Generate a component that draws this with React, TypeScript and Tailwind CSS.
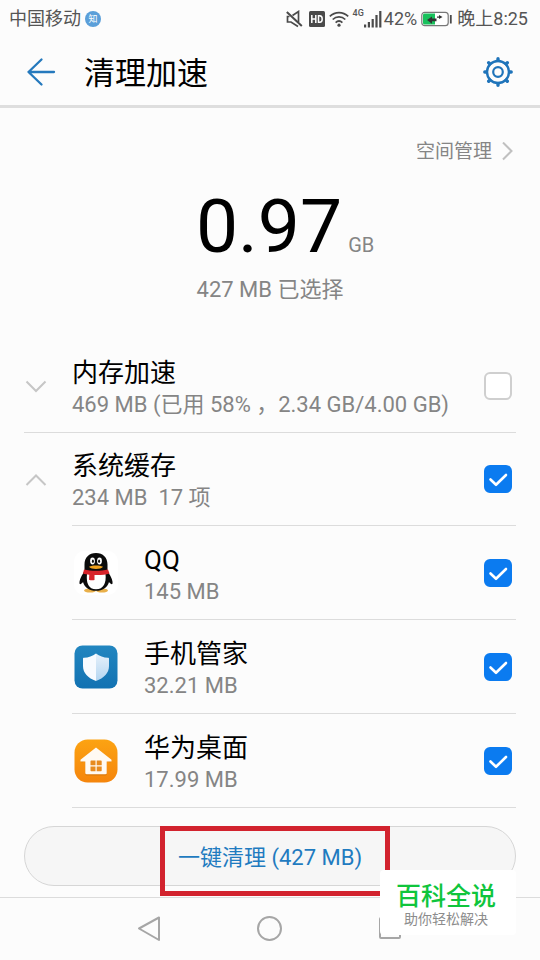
import { useState } from 'react';
import type { ReactNode } from 'react';

type CacheApp = {
  id: string;
  name: string;
  size: string;
  icon: ReactNode;
};

function StatusBar() {
  return (
    <div className="flex h-[38px] items-center justify-between pl-[9px] pr-3 text-lg leading-6 text-[#555]">
      <div className="flex items-center gap-1">
        <span>中国移动</span>
        <span className="flex size-4 items-center justify-center rounded-full bg-[#5b9fd9] text-[9px] leading-4 text-white">
          知
        </span>
      </div>
      <div className="flex items-center">
        {/* muted speaker */}
        <svg width="17" height="18" viewBox="0 0 17 18" fill="none" stroke="#4a4a4a" strokeWidth="1.700" aria-hidden="true">
          <path d="M3.500 6.500H1.500v5.500H5l7 4.500M6.500 5.500l6-4V12" />
          <path d="M.8 2l15 14" strokeWidth="2" />
        </svg>
        <svg className="ml-1.5" width="16" height="16" viewBox="0 0 16 16" aria-hidden="true">
          <rect width="16" height="16" rx="1.500" fill="#4a4a4a" />
          <path d="M2.800 4v8M6.800 4v8M2.800 8h4M9.500 4.700v6.600h1.300c1.600 0 2.400-1 2.400-3.300s-.8-3.300-2.400-3.300z" fill="none" stroke="#fff" strokeWidth="1.500" />
        </svg>
        <svg className="ml-1" width="20" height="16" viewBox="0 0 20 16" fill="none" stroke="#4a4a4a" strokeWidth="1.700" aria-hidden="true">
          <path d="M.8 5.300c5.200-5 13.200-5 18.400 0M3.700 8.500c3.600-3.500 9-3.500 12.600 0M6.600 11.600c2-1.900 4.800-1.900 6.800 0" />
          <circle cx="10" cy="14.200" r="1.600" fill="#4a4a4a" stroke="none" />
        </svg>
        <span className="ml-1 self-start text-[9px] font-medium leading-3">4G</span>
        <svg width="18" height="17" viewBox="0 0 18 17" fill="#4a4a4a" aria-hidden="true">
          <rect x="0" y="13.500" width="2.200" height="3" />
          <rect x="3.800" y="11" width="2.200" height="5.500" />
          <rect x="7.600" y="8" width="2.200" height="8.500" />
          <rect x="11.400" y="4" width="2.200" height="12.500" />
          <rect x="15.200" y="0" width="2.200" height="16.500" />
        </svg>
        <span className="ml-0.5">42%</span>
        <svg className="ml-1" width="32" height="16" viewBox="0 0 32 16" aria-hidden="true">
          <rect x=".8" y="1.300" width="26.400" height="13.400" rx="3" fill="#fff" stroke="#777" strokeWidth="1.200" />
          <path d="M3.500 2.500H14v11H3.500a1.500 1.500 0 0 1-1.500-1.500V4a1.500 1.500 0 0 1 1.500-1.500z" fill="#18c15c" />
          <path d="M6 9l5-3.500V7.500h4.500v2.800H11v2.500zM16 5.500h2V4l3.500 2-3.500 2V6.800h-2z" fill="#333" />
          <path d="M29.800 4v8.500" stroke="#4a4a4a" strokeWidth="1.800" />
        </svg>
        <span className="ml-1">晚上8:25</span>
      </div>
    </div>
  );
}

function Header() {
  return (
    <header className="flex h-[70px] items-center border-b-3 border-[#dedede] pl-[26px] pr-[27px]">
      <button type="button" aria-label="返回">
        <svg width="30" height="30" viewBox="0 0 30 30" fill="none" stroke="#2579bd" strokeWidth="2.300" strokeLinecap="round" strokeLinejoin="round">
          <path d="M28 15H2.500M15.500 2.500L2.500 15l13 12.500" />
        </svg>
      </button>
      <h1 className="ml-7 flex-1 pt-1 text-[31px] leading-10 text-black">清理加速</h1>
      <button type="button" aria-label="设置">
        <svg width="30" height="30" viewBox="0 0 30 30" fill="none" stroke="#1f74ba">
          <circle cx="15" cy="15" r="11" strokeWidth="2.400" />
          <circle cx="15" cy="15" r="4.800" strokeWidth="2.200" />
          <path
            d="M15 3.500V1.800M15 26.500v1.700M3.500 15H1.800M26.500 15h1.700M6.900 6.900L5.700 5.700M23.100 23.100l1.200 1.200M6.900 23.100l-1.200 1.200M23.100 6.900l1.200-1.200"
            strokeWidth="3.400"
            strokeLinecap="round"
          />
        </svg>
      </button>
    </header>
  );
}

function CheckBox({ id, label, checked, onChange }: { id: string; label: string; checked: boolean; onChange: () => void }) {
  return (
    <span className="relative mr-1 size-7 shrink-0">
      <input
        id={id}
        type="checkbox"
        aria-label={label}
        checked={checked}
        onChange={onChange}
        className="block size-7 appearance-none rounded-md border-2 border-[#cfcfcf] bg-white checked:border-[#0b7bf0] checked:bg-[#0b7bf0]"
      />
      {checked && (
        <svg className="pointer-events-none absolute inset-0" width="28" height="28" viewBox="0 0 28 28" fill="none" stroke="#fff" strokeWidth="2.600" strokeLinecap="round" strokeLinejoin="round" aria-hidden="true">
          <path d="M6.500 14.500l5.500 5.300L22 10" />
        </svg>
      )}
    </span>
  );
}

function RowText({ htmlFor, title, detail }: { htmlFor: string; title: string; detail: string }) {
  return (
    <label htmlFor={htmlFor} className="min-w-0 flex-1 pt-1.5">
      <span className="block text-[26px] leading-8 text-black">{title}</span>
      <span className="block whitespace-pre text-[22px] leading-8 text-[#858585]">{detail}</span>
    </label>
  );
}

function Chevron({ open, label, onClick }: { open: boolean; label: string; onClick?: () => void }) {
  return (
    <button type="button" aria-label={label} aria-expanded={open} onClick={onClick} className="w-12 shrink-0">
      <svg width="24" height="24" viewBox="0 0 24 24" fill="none" stroke="#c6c6c6" strokeWidth="2">
        <path d={open ? 'M2.500 17L12 7.500 21.500 17' : 'M2.500 7.500L12 17l9.500-9.500'} />
      </svg>
    </button>
  );
}

const QQIcon = (
  <svg width="44" height="44" viewBox="0 0 44 44" aria-hidden="true">
    <rect width="44" height="44" rx="10" fill="#fff" />
    <ellipse cx="16" cy="39.500" rx="6" ry="2" fill="#e9b04a" />
    <ellipse cx="28" cy="39.500" rx="6" ry="2" fill="#e9b04a" />
    <path d="M22 2c-7 0-11.500 4.500-11.500 11.500V20c-2.500 4-5.500 9-5 12.500.3 1.500 2 .5 3.500-1.500C10.500 36.500 15.500 39.800 22 39.800S33.500 36.500 35 31c1.500 2 3.200 3 3.500 1.500.5-3.500-2.500-8.500-5-12.500v-6.500C33.500 6.500 29 2 22 2z" fill="#0b0b0b" />
    <path d="M13 23c-1 9 1.500 15.300 9 15.300S32.500 32 31.500 23z" fill="#fff" />
    <ellipse cx="18.500" cy="10" rx="2.400" ry="3.400" fill="#fff" />
    <ellipse cx="25.500" cy="10" rx="2.400" ry="3.400" fill="#fff" />
    <ellipse cx="18.900" cy="10.300" rx="1" ry="1.700" fill="#111" />
    <ellipse cx="25.100" cy="10.300" rx="1" ry="1.700" fill="#111" />
    <path d="M15 15.800c4-1.800 10-1.800 14 0-2 3-12 3-14 0z" fill="#efa21f" />
    <path d="M10 18.500c7 1.700 17 1.700 24 0l1.500 4c-4 1.200-9 1.700-15 1.500v5c-2 .5-4 .3-5.500-.3l.3-5c-2.500-.2-4.300-.5-6.300-1.200z" fill="#d8232a" />
  </svg>
);

const ShieldIcon = (
  <svg width="44" height="44" viewBox="0 0 44 44" aria-hidden="true">
    <defs>
      <linearGradient id="shield-bg" x1="0" y1="0" x2="0" y2="1">
        <stop offset="0" stopColor="#2286c0" />
        <stop offset="1" stopColor="#1272b2" />
      </linearGradient>
      <linearGradient id="shield-right" x1="0" y1="0" x2="0" y2="1">
        <stop offset="0" stopColor="#e6f1fb" />
        <stop offset="1" stopColor="#b4d6f1" />
      </linearGradient>
    </defs>
    <rect x=".5" y=".5" width="43" height="43" rx="8" fill="url(#shield-bg)" />
    <path d="M22 8.500c-3.500 2.800-7.500 4-12 4.300-.7 0-1 .4-1 1V21c0 7 5 12 13 15z" fill="#f7fbff" />
    <path d="M22 8.500c3.500 2.800 7.500 4 12 4.300.7 0 1 .4 1 1V21c0 7-5 12-13 15z" fill="url(#shield-right)" />
  </svg>
);

const HomeIcon = (
  <svg width="44" height="44" viewBox="0 0 44 44" aria-hidden="true">
    <defs>
      <linearGradient id="home-bg" x1="0" y1="0" x2="0" y2="1">
        <stop offset="0" stopColor="#fca312" />
        <stop offset="1" stopColor="#f5850c" />
      </linearGradient>
    </defs>
    <rect x=".5" y=".5" width="43" height="43" rx="13" fill="url(#home-bg)" />
    <path d="M22 10L6.500 22.500l1.500 1 3.500-1.500v13c0 1 .5 1.500 1.500 1.500h18c1 0 1.500-.5 1.500-1.500V22l3.500 1.500 1.500-1z" fill="#b3600a" opacity=".4" />
    <path d="M22 8.500L6.500 20.800v1.700h4.800V34c0 .8.400 1.200 1.200 1.200h19c.8 0 1.200-.4 1.200-1.200V22.500h4.800v-1.700z" fill="#fffaf3" />
    <path d="M17.500 21.500h4v4.700h-5v-3.700c0-.6.400-1 1-1zM22.700 21.500h4c.6 0 1 .4 1 1v3.700h-5zM16.500 27.500h5v4.700h-4c-.6 0-1-.4-1-1zM22.700 27.500h5v3.700c0 .6-.4 1-1 1h-4z" fill="#e88b20" />
  </svg>
);

const apps: CacheApp[] = [
  { id: 'qq', name: 'QQ', size: '145 MB', icon: QQIcon },
  { id: 'manager', name: '手机管家', size: '32.21 MB', icon: ShieldIcon },
  { id: 'launcher', name: '华为桌面', size: '17.99 MB', icon: HomeIcon },
];

export default function App() {
  const [selected, setSelected] = useState<string[]>(['system', 'qq', 'manager', 'launcher']);
  const [systemOpen, setSystemOpen] = useState(true);

  const toggle = (id: string) => {
    setSelected((prev) => (prev.includes(id) ? prev.filter((item) => item !== id) : [...prev, id]));
  };

  return (
    <div className="flex min-h-screen flex-col bg-[#fcfcfc] font-['Roboto','Noto_Sans_CJK_SC',sans-serif]">
      <StatusBar />
      <Header />

      <main className="flex-1 px-6">
        <div className="flex justify-end pt-[30px]">
          <a href="#storage" className="flex items-center gap-2.5 text-[19px] leading-7 text-[#858585]">
            空间管理
            <svg width="14" height="20" viewBox="0 0 14 20" fill="none" stroke="#c0c0c0" strokeWidth="2" aria-hidden="true">
              <path d="M1 .5L9.500 9 1 17.500" />
            </svg>
          </a>
        </div>

        {/* Total size */}
        <div className="mt-5 flex items-baseline">
          <span className="flex-1" />
          <span className="pl-1 text-[75px] leading-20 text-black">0.97</span>
          <span className="flex-1 pl-1.5 text-xl text-[#858585]">GB</span>
        </div>
        <p className="mt-2 text-center text-[22px] leading-8 text-[#858585]">427 MB 已选择</p>

        <ul className="mt-[34px]">
          <li className="flex h-[93px] items-center border-b border-[#dcdcdc]">
            <Chevron open={false} label="展开内存加速" />
            <RowText htmlFor="memory" title="内存加速" detail="469 MB (已用 58% ，2.34 GB/4.00 GB)" />
            <CheckBox id="memory" label="内存加速" checked={selected.includes('memory')} onChange={() => toggle('memory')} />
          </li>
          <li>
            <div className="flex h-[93px] items-center">
              <Chevron open={systemOpen} label="系统缓存" onClick={() => setSystemOpen(!systemOpen)} />
              <div className="flex h-full flex-1 items-center border-b border-[#dcdcdc]">
                <RowText htmlFor="system" title="系统缓存" detail="234 MB  17 项" />
                <CheckBox id="system" label="系统缓存" checked={selected.includes('system')} onChange={() => toggle('system')} />
              </div>
            </div>
            {systemOpen && (
              <ul className="pl-12">
                {apps.map((app) => (
                  <li key={app.id} className="flex h-[94px] items-center gap-6 border-b border-[#dcdcdc]">
                    <span className="flex w-12 justify-center">{app.icon}</span>
                    <RowText htmlFor={app.id} title={app.name} detail={app.size} />
                    <CheckBox id={app.id} label={app.name} checked={selected.includes(app.id)} onChange={() => toggle(app.id)} />
                  </li>
                ))}
              </ul>
            )}
          </li>
        </ul>

        <div className="relative mt-[18px] mb-[11px]">
          <button type="button" className="block h-[60px] w-full rounded-full border border-[#d6d6d6] bg-[#f6f6f6] pt-1 text-[22px] leading-8 text-[#1f7bc0]">
            一键清理 (427 MB)
          </button>
          <div className="pointer-events-none absolute top-0 right-[126px] -bottom-2.5 left-[136px] border-5 border-[#d2232e]" />
        </div>
      </main>

      <nav className="relative flex h-[63px] items-center justify-center gap-24 border-t border-[#dcdcdc]">
        <button type="button" aria-label="返回键">
          <svg width="24" height="28" viewBox="0 0 24 28" fill="none" stroke="#a6a6a6" strokeWidth="2" strokeLinejoin="round">
            <path d="M22 2.500v22.500L2 13.500z" />
          </svg>
        </button>
        <button type="button" aria-label="主屏幕">
          <svg width="26" height="26" viewBox="0 0 26 26" fill="none" stroke="#a6a6a6" strokeWidth="2">
            <circle cx="12.500" cy="12.500" r="11.500" />
          </svg>
        </button>
        <button type="button" aria-label="最近任务">
          <svg width="24" height="24" viewBox="0 0 24 24" fill="none" stroke="#a6a6a6" strokeWidth="2">
            <rect x="1" y="1" width="20" height="20" rx="1" />
          </svg>
        </button>
        <div className="absolute -top-7 right-6 flex h-[65px] w-[136px] flex-col items-center justify-center rounded-sm bg-white pt-2 pr-1">
          <strong className="text-[25px] leading-6 font-medium text-[#0fc53c]">百科全说</strong>
          <span className="text-sm leading-5 text-[#8c8c8c]">助你轻松解决</span>
        </div>
      </nav>
    </div>
  );
}
